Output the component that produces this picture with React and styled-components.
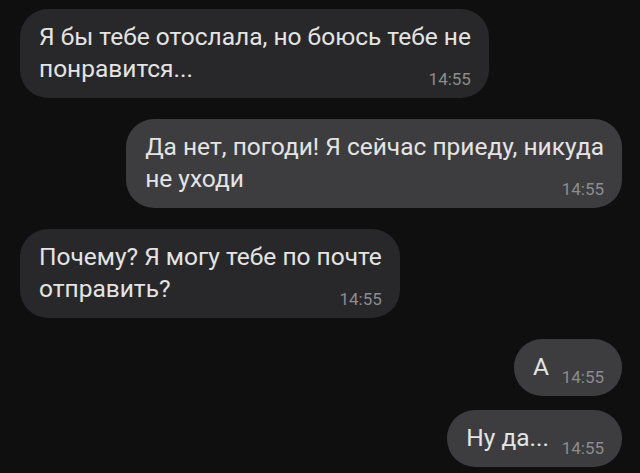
import React from 'react'
import styled, { createGlobalStyle } from 'styled-components'

const GlobalStyle = createGlobalStyle`
    html, body {
        margin: 0;
        padding: 0;
        background: #0f0f10;
    }
    body {
        font-family: Roboto, "Noto Sans", sans-serif;
        -webkit-font-smoothing: antialiased;
    }
`

const messages = [
    { id: 1, out: false, lines: ['Я бы тебе отослала, но боюсь тебе не', 'понравится...'], time: '14:55' },
    { id: 2, out: true, lines: ['Да нет, погоди! Я сейчас приеду, никуда', 'не уходи'], time: '14:55' },
    { id: 3, out: false, lines: ['Почему? Я могу тебе по почте', 'отправить?'], time: '14:55' },
    { id: 4, out: true, lines: ['А'], time: '14:55' },
    { id: 5, out: true, lines: ['Ну да...'], time: '14:55', grouped: true },
]

const App = () => {
    return (
        <>
            <GlobalStyle />
            <Chat>
                {messages.map((m) => (
                    <Row key={m.id} $out={m.out} $grouped={m.grouped}>
                        <Bubble $out={m.out}>
                            <Text>
                                {m.lines.map((line, i) => (
                                    <React.Fragment key={i}>
                                        {i > 0 && <br />}
                                        {line}
                                    </React.Fragment>
                                ))}
                                {/* место под время справа внизу */}
                                <Spacer />
                            </Text>
                            <Time>{m.time}</Time>
                        </Bubble>
                    </Row>
                ))}
            </Chat>
        </>
    )
}

export default App

const Chat = styled.div`
    display: flex;
    flex-direction: column;
    padding: 9px 18px 0 20px;
    height: 473px;
    box-sizing: border-box;
    overflow: hidden;
`

const Row = styled.div`
    display: flex;
    justify-content: ${(p) => (p.$out ? 'flex-end' : 'flex-start')};
    margin-top: ${(p) => (p.$grouped ? '14px' : '21px')};

    &:first-child {
        margin-top: 0;
    }
`

const Bubble = styled.div`
    position: relative;
    background: ${(p) => (p.$out ? '#3d3d3f' : '#28282a')};
    border-radius: 28px;
    padding: 12px 18px 13px 19px;
`

const Text = styled.div`
    color: #e4e4e4;
    font-size: 24.5px;
    line-height: 32px;
    white-space: nowrap;
`

const Spacer = styled.span`
    display: inline-block;
    width: 55px;
`

const Time = styled.span`
    position: absolute;
    right: 18px;
    bottom: 11px;
    font-size: 17px;
    line-height: 16px;
    color: #8c8c8e;
`
